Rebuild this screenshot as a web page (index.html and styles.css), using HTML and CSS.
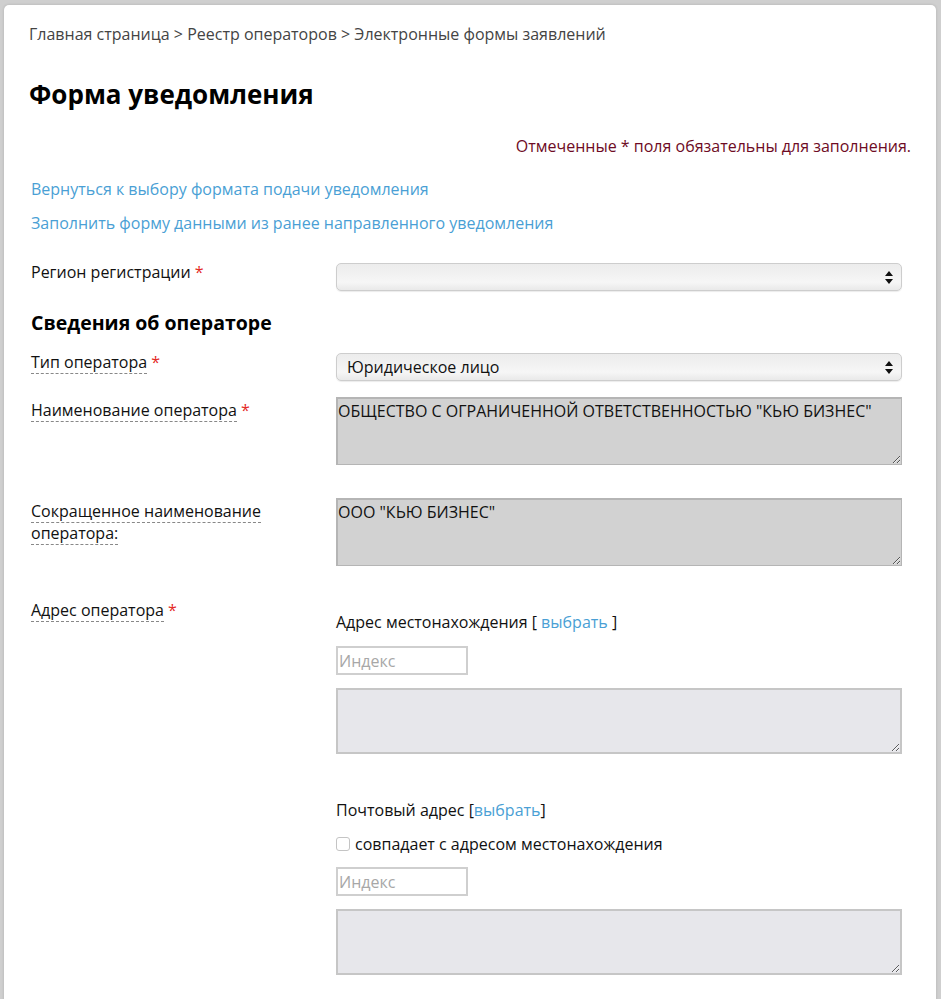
FILE: index.html
```html
<!DOCTYPE html>
<html lang="ru">
<head>
    <meta charset="UTF-8">
    <meta name="viewport" content="width=device-width, initial-scale=1.0">
    <title>Форма уведомления</title>
    <link rel="stylesheet" href="styles.css">
</head>
<body>
<div class="page">
    <div class="breadcrumbs">
        <a href="#">Главная страница</a> &gt; <a href="#">Реестр операторов</a> &gt; <span>Электронные формы заявлений</span>
    </div>

    <h1>Форма уведомления</h1>

    <p class="required-note">Отмеченные * поля обязательны для заполнения.</p>

    <p class="nav-link"><a href="#">Вернуться к выбору формата подачи уведомления</a></p>
    <p class="nav-link"><a href="#">Заполнить форму данными из ранее направленного уведомления</a></p>

    <form class="notice-form">
        <div class="row row-select">
            <label class="caption" for="region">Регион регистрации <span class="star">*</span></label>
            <div class="field">
                <div class="select-wrap">
                    <select id="region"><option></option></select>
                    <svg class="select-arrows" width="8" height="13" viewBox="0 0 8 13"><path d="M4 0 L8 5 L0 5 Z M0 8 L8 8 L4 13 Z" fill="#111"/></svg>
                </div>
            </div>
        </div>

        <h2>Сведения об операторе</h2>

        <div class="row row-select">
            <label class="caption" for="opType"><span class="hint">Тип оператора</span> <span class="star">*</span></label>
            <div class="field">
                <div class="select-wrap">
                    <select id="opType"><option>Юридическое лицо</option></select>
                    <svg class="select-arrows" width="8" height="13" viewBox="0 0 8 13"><path d="M4 0 L8 5 L0 5 Z M0 8 L8 8 L4 13 Z" fill="#111"/></svg>
                </div>
            </div>
        </div>

        <div class="row row-text">
            <label class="caption" for="opName"><span class="hint">Наименование оператора</span> <span class="star">*</span></label>
            <div class="field">
                <textarea id="opName" class="readonly" readonly>ОБЩЕСТВО С ОГРАНИЧЕННОЙ ОТВЕТСТВЕННОСТЬЮ "КЬЮ БИЗНЕС"</textarea>
            </div>
        </div>

        <div class="row row-text">
            <label class="caption" for="opShort"><span class="hint">Сокращенное наименование оператора:</span></label>
            <div class="field">
                <textarea id="opShort" class="readonly" readonly>ООО "КЬЮ БИЗНЕС"</textarea>
            </div>
        </div>

        <div class="row row-address">
            <label class="caption"><span class="hint">Адрес оператора</span> <span class="star">*</span></label>
            <div class="field">
                <div class="address-block">
                    <div class="address-title">Адрес местонахождения [ <a href="#">выбрать</a> ]</div>
                    <input type="text" class="zip" placeholder="Индекс">
                    <textarea class="address"></textarea>
                </div>
                <div class="address-block">
                    <div class="address-title">Почтовый адрес [<a href="#">выбрать</a>]</div>
                    <label class="same-address"><input type="checkbox"> совпадает с адресом местонахождения</label>
                    <input type="text" class="zip" placeholder="Индекс">
                    <textarea class="address"></textarea>
                </div>
            </div>
        </div>
    </form>
</div>
</body>
</html>
```

FILE: styles.css
```css
html, body {
    margin: 0;
    padding: 0;
}

body {
    font-family: "Open Sans", "Liberation Sans", sans-serif;
    font-size: 16px;
    color: #111;
    background-color: #cfcfcf;
    padding: 5px 5px 0 4px;
}

a {
    color: #4a9fd5;
    text-decoration: none;
}

.page {
    background-color: #fff;
    border-radius: 5px 5px 0 0;
    box-shadow: 0 0 3px rgba(0, 0, 0, 0.15);
    padding: 15px 34px 40px 25px;
    min-height: 1000px;
}

.breadcrumbs {
    color: #444;
    line-height: 28px;
}

.breadcrumbs a {
    color: #444;
}

h1 {
    font-size: 26px;
    font-weight: bold;
    color: #000;
    margin: 30px 0 0;
    line-height: 32px;
}

.required-note {
    text-align: right;
    color: #6e0b25;
    margin: 24px -9px 0 0;
    line-height: 24px;
}

.nav-link {
    margin: 0 0 0 2px;
    line-height: 24px;
    padding-top: 10px;
}

.required-note + .nav-link {
    padding-top: 19px;
}

.notice-form {
    margin: 28px 0 0 2px;
}

.row {
    display: grid;
    grid-template-columns: 305px 1fr;
    align-items: start;
}

.caption {
    line-height: 22px;
    padding: 2px 40px 0 0;
}

.row-select .caption {
    padding-top: 0;
    margin-top: -2px;
}

.hint {
    border-bottom: 1px dashed #888;
}

.star {
    color: #e42a1f;
}

h2 {
    font-size: 19.5px;
    font-weight: bold;
    color: #000;
    margin: 20px 0 18px;
    line-height: 24px;
}

.select-wrap {
    position: relative;
}

select {
    display: block;
    width: 100%;
    height: 28px;
    -webkit-appearance: none;
    appearance: none;
    border: 1px solid #cdcdcd;
    border-radius: 5px;
    background: linear-gradient(#ececec, #f6f6f6 70%, #e9e9e9);
    font-family: inherit;
    font-size: 16px;
    color: #111;
    padding: 0 10px;
    box-shadow: 0 1px 1px rgba(0, 0, 0, 0.08);
}

.select-arrows {
    position: absolute;
    right: 9px;
    top: 8px;
    pointer-events: none;
}

.row-text {
    margin-top: 16px;
}

textarea {
    display: block;
    width: 100%;
    box-sizing: border-box;
    font-family: inherit;
    font-size: 16px;
    color: #111;
}

textarea.readonly {
    height: 68px;
    background-color: #d2d2d2;
    border: 2px solid #b5b5b5;
    border-width: 2px 1px 1px 2px;
    padding: 2px 0 0 0;
    line-height: 20px;
}

.row-text + .row-text {
    margin-top: 33px;
}

.row-address {
    margin-top: 31px;
}

.address-block {
    padding-top: 14px;
}

.address-block + .address-block {
    padding-top: 45px;
}

.address-title {
    line-height: 22px;
    margin-bottom: 13px;
}

.zip {
    display: block;
    width: 132px;
    height: 29px;
    box-sizing: border-box;
    border: 2px solid #cfcfcf;
    font-family: inherit;
    font-size: 16px;
    padding: 0 0 0 1px;
}

.zip::placeholder {
    color: #a7a7a7;
}

textarea.address {
    height: 66px;
    margin-top: 13px;
    background-color: #e7e7eb;
    border: 2px solid #c6c6c6;
}

.same-address {
    display: flex;
    align-items: center;
    gap: 5px;
    line-height: 22px;
    margin: -1px 0 12px;
}

.same-address input {
    -webkit-appearance: none;
    appearance: none;
    width: 14px;
    height: 14px;
    margin: 0;
    border: 1px solid #c4c4c4;
    border-radius: 3px;
    background: #fff;
}
```
